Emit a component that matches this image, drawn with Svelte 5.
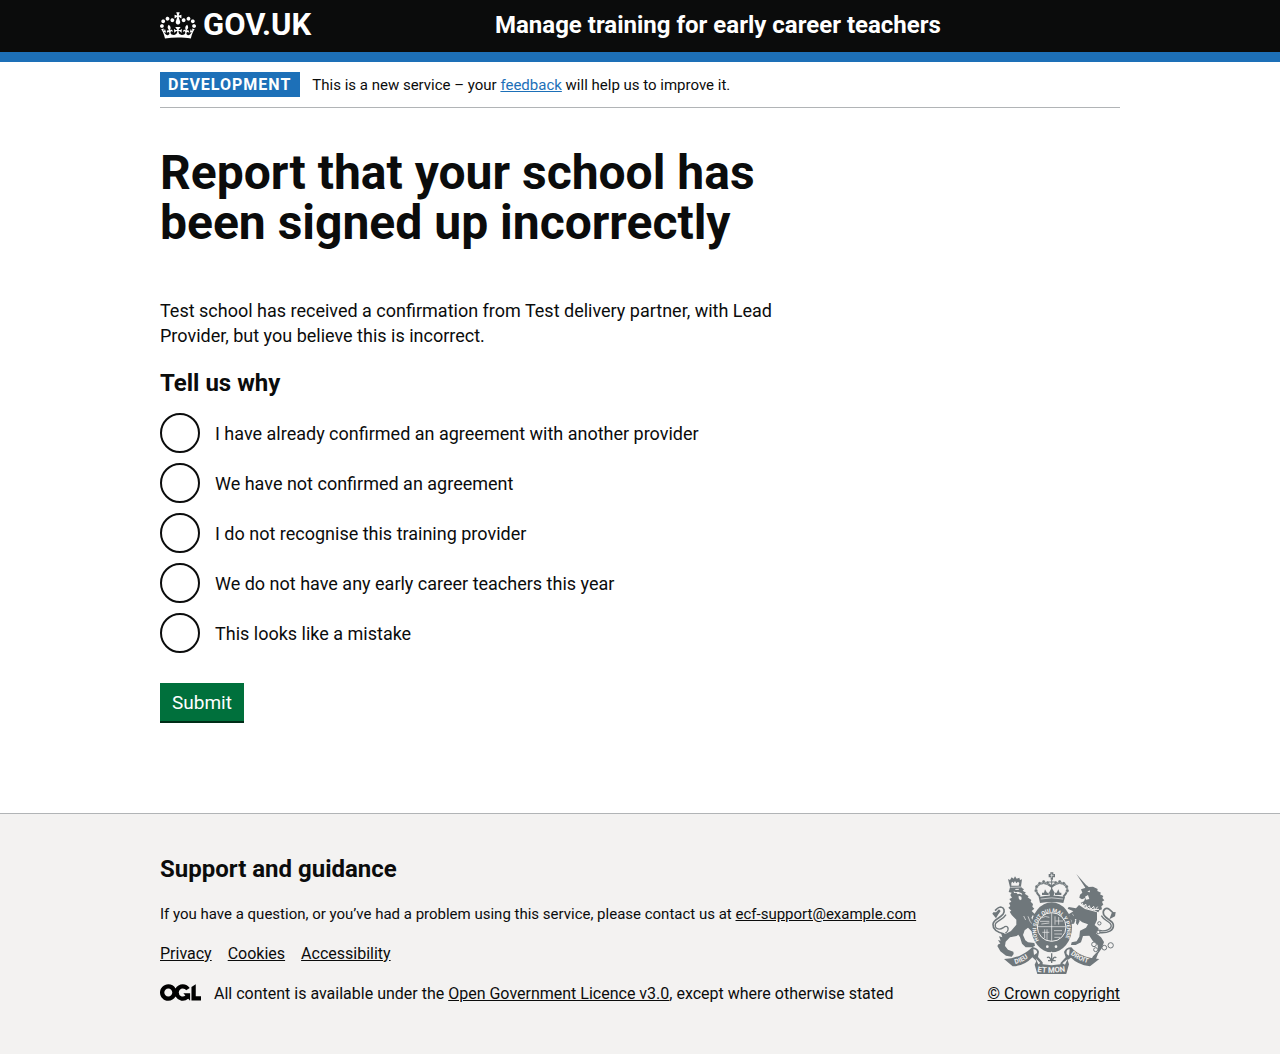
<script>
  const reasons = [
    'I have already confirmed an agreement with another provider',
    'We have not confirmed an agreement',
    'I do not recognise this training provider',
    'We do not have any early career teachers this year',
    'This looks like a mistake'
  ];
  let chosen = $state('');
  const crownBeads = [[171, 86], [173, 74], [182, 64], [194, 59], [206, 62], [230, 62], [242, 59], [254, 64], [263, 74], [265, 86]];
</script>

<div class="page">
  <header class="header">
    <div class="container header-row">
      <a class="logo" href="/">
        <svg class="crown" viewBox="0 0 132 97" aria-hidden="true">
          <path d="M25 30.2c3.5 1.5 7.7-.2 9.1-3.7 1.5-3.6-.2-7.8-3.9-9.2-3.6-1.4-7.6.3-9.1 3.9-1.4 3.5.3 7.5 3.9 9zM9 39.5c3.6 1.5 7.8-.2 9.2-3.7 1.5-3.6-.2-7.8-3.9-9.1-3.6-1.5-7.6.2-9.1 3.8-1.4 3.5.3 7.5 3.8 9zM4.4 57.2c3.5 1.5 7.7-.2 9.1-3.8 1.5-3.6-.2-7.7-3.9-9.1-3.5-1.5-7.6.3-9.1 3.8-1.4 3.5.3 7.6 3.9 9.1zm38.3-21.4c3.5 1.5 7.7-.2 9.1-3.8 1.5-3.6-.2-7.7-3.9-9.1-3.6-1.5-7.6.3-9.1 3.8-1.3 3.6.4 7.7 3.9 9.1zm64.4-5.6c-3.6 1.5-7.8-.2-9.1-3.7-1.5-3.6.2-7.8 3.8-9.2 3.6-1.4 7.7.3 9.2 3.9 1.3 3.5-.4 7.5-3.9 9zm15.9 9.3c-3.6 1.5-7.7-.2-9.1-3.7-1.5-3.6.2-7.8 3.7-9.1 3.6-1.5 7.7.2 9.2 3.8 1.5 3.5-.3 7.5-3.8 9zm4.7 17.7c-3.6 1.5-7.8-.2-9.2-3.8-1.5-3.6.2-7.7 3.9-9.1 3.6-1.5 7.7.3 9.2 3.8 1.3 3.5-.4 7.6-3.9 9.1zM89.3 35.8c-3.6 1.5-7.8-.2-9.2-3.8-1.4-3.6.2-7.7 3.9-9.1 3.6-1.5 7.7.3 9.2 3.8 1.4 3.6-.3 7.7-3.9 9.1zM69.7 17.7l8.9 4.7V9.3l-8.9 2.8c-.2-.3-.5-.6-.9-.9L72.4 0H59.6l3.5 11.2c-.3.3-.6.5-.9.9l-8.8-2.8v13.1l8.8-4.7c.3.3.6.7.9.9l-5 15.4v.1c-.2.8-.4 1.6-.4 2.4 0 4.1 3.1 7.5 7 8.1h.2c.3 0 .7.1 1 .1.4 0 .7 0 1-.1h.2c4-.6 7.1-4.1 7.1-8.1 0-.8-.1-1.7-.4-2.4V34l-5.1-15.4c.4-.2.7-.6 1-.9zM66 92.8c16.9 0 32.8 1.1 47.1 3.2 4-16.9 8.9-26.7 14-33.5l-9.6-3.4c1 4.9 1.1 7.2 0 10.2-1.5-1.4-3-4.3-4.2-8.7L108.6 76c2.8-2 5-3.2 7.5-3.3-4.4 9.4-10 11.9-13.6 11.2-4.3-.8-6.3-4.6-5.6-7.9 1-4.7 5.7-5.9 8-.5 4.3-8.7-3-11.4-7.6-8.8 7.1-7.2 7.9-13.5 2.1-21.1-8 6.1-8.1 12.3-4.5 20.8-4.7-5.4-12.1-2.5-9.5 6.2 3.4-5.2 7.9-2 7.2 3.1-.6 4.3-6.4 7.8-13.5 7.2-10.3-.9-10.9-8-11.2-13.8 2.5-.5 7.1 1.8 11 7.3L80.2 60c-4.1 4.4-8 5.3-12.3 5.4 1.4-4.4 8-11.6 8-11.6H55.5s6.4 7.2 7.9 11.6c-4.2-.1-8-1-12.3-5.4l1.4 16.4c3.9-5.5 8.5-7.7 10.9-7.3-.3 5.8-.9 12.8-11.1 13.8-7.2.6-12.9-2.9-13.5-7.2-.7-5 3.8-8.3 7.1-3.1 2.7-8.7-4.6-11.6-9.4-6.2 3.7-8.5 3.6-14.7-4.6-20.8-5.8 7.6-5 13.9 2.2 21.1-4.7-2.6-11.9.1-7.7 8.8 2.3-5.5 7.1-4.2 8.1.5.7 3.3-1.3 7.1-5.7 7.9-3.5.7-9-1.8-13.5-11.2 2.5.1 4.7 1.3 7.5 3.3l-4.7-15.4c-1.2 4.4-2.7 7.2-4.3 8.7-1.1-3-.9-5.3 0-10.2l-9.5 3.4c5 6.9 9.9 16.7 14 33.5 14.8-2.1 30.8-3.2 47.7-3.2z" />
        </svg>
        <span>GOV.UK</span>
      </a>
      <a class="service" href="/service">Manage training for early career teachers</a>
    </div>
  </header>

  <div class="container">
    <div class="phase">
      <strong class="tag">DEVELOPMENT</strong>
      <span class="phase-text">This is a new service – your <a href="/feedback">feedback</a> will help us to improve it.</span>
    </div>
  </div>

  <main class="container main">
    <div class="column">
      <h1>Report that your school has been signed up incorrectly</h1>
      <p class="body">Test school has received a confirmation from Test delivery partner, with Lead Provider, but you believe this is incorrect.</p>
      <form onsubmit={(e) => e.preventDefault()}>
        <fieldset>
          <legend>Tell us why</legend>
          <div class="radios">
            {#each reasons as reason, i}
              <div class="radio">
                <input type="radio" name="reason" id="reason-{i}" value={reason} bind:group={chosen} />
                <label for="reason-{i}">{reason}</label>
              </div>
            {/each}
          </div>
        </fieldset>
        <button type="submit">Submit</button>
      </form>
    </div>
  </main>

  <footer class="footer">
    <div class="container footer-row">
      <div class="footer-main">
        <h2>Support and guidance</h2>
        <p>If you have a question, or you’ve had a problem using this service, please contact us at <a href="mailto:ecf-support@example.com">ecf-support@example.com</a></p>
        <ul>
          <li><a href="/privacy">Privacy</a></li>
          <li><a href="/cookies">Cookies</a></li>
          <li><a href="/accessibility">Accessibility</a></li>
        </ul>
        <div class="licence">
          <svg class="ogl" viewBox="0 0 483.2 195.7" aria-hidden="true">
            <path d="M421.5 142.8V.1l-50.7 32.3v161.1h112.4v-50.7zm-122.3-9.6A47.12 47.12 0 0 1 221 97.8c0-26 21.1-47.1 47.1-47.1 16.7 0 31.4 8.7 39.7 21.8l42.7-27.2A97.63 97.63 0 0 0 268.1 0c-36.5 0-68.3 20.1-85.1 49.7A98 98 0 0 0 97.8 0C43.9 0 0 43.9 0 97.8s43.9 97.8 97.8 97.8c36.5 0 68.3-20.1 85.1-49.7a97.76 97.76 0 0 0 149.6 25.4l19.4 22.2h3v-87.8h-80l24.3 27.5zM97.8 145c-26 0-47.1-21.1-47.1-47.1s21.1-47.1 47.1-47.1 47.1 21.1 47.1 47.1S123.8 145 97.8 145" />
          </svg>
          <span>All content is available under the <a href="/licence">Open Government Licence v3.0</a>, except where otherwise stated</span>
        </div>
      </div>
      <a class="copyright" href="/copyright">
        <svg class="crest" viewBox="36 30 375 306" aria-hidden="true">
          <defs>
            <path id="garter" d="M180 235A46 54 0 1 1 256 235" />
            <path id="ribbon-left" d="M109 306Q134 300 157 281" />
            <path id="ribbon-mid" d="M175 329Q218 336 266 327" />
            <path id="ribbon-right" d="M275 277Q298 297 334 305" />
          </defs>
          <!-- lion -->
          <path class="ink" d="M93 76L87 51L93 54L98 46L104 50L108 43L113 50L121 47L123 54L129 52L126 73L129 78L135 82L131 86L141 92L137 95L149 103L146 106L157 114L155 119L162 126L160 134L166 140L158 147L164 153L170 158L169 164L161 160L157 168L166 180L170 187L165 198L158 194L164 209L157 207L147 197L137 205L132 219L139 235L147 241L166 243L168 251L160 256L140 256L129 245L123 226L118 218L113 222L93 226L80 239L78 252L87 263L103 269L104 276L98 284L81 281L64 268L55 252L59 246L64 245L57 234L65 236L60 223L70 226L66 213L79 216L96 207L112 188L112 173L98 159L92 149L97 146L88 137L94 132L90 123L97 119L91 111L99 107L94 99L98 92L89 90L91 83Z" />
          <path class="gap" d="M97 62L101 59L104 64L108 57L112 64L117 59L121 63L119 71L97 71ZM104 88L110 91L117 89L128 94L130 99L122 95L116 97L113 93L105 93ZM119 101L127 104L128 112L123 115L119 109ZM109 81L119 80L120 83L109 84Z" />
          <path class="gap-line" d="M94 76L128 75M147 163L153 178L163 190M134 162L140 174" />
          <path class="line" stroke-width="5" d="M76 216C56 211 41 201 42 187C43 171 61 171 72 157C79 147 75 136 65 135C56 135 54 141 48 146" />
          <path class="line" stroke-width="4" d="M79 214C94 202 86 186 73 197C57 207 47 197 49 187C51 177 72 174 81 158" />
          <path class="ink" d="M51 169L40 155L43 151L51 151L60 142L65 147L57 158Z" />
          <!-- unicorn -->
          <path class="ink" d="M292 36L324 72L320 79ZM306 82L318 78L323 70L329 75L342 74L356 81L355 87L366 92L363 97L373 102L370 108L376 115L369 119L373 128L367 133L369 142L361 145L358 151L350 147L318 137L305 122L315 118L319 108L309 112L301 107L303 98L310 92ZM269 135L291 139L300 129L318 141L354 151L354 174L347 189L359 199L351 214L366 226L375 240L369 258L357 275L349 296L332 301L342 283L357 267L356 249L342 238L331 221L312 222L306 241L290 249L276 249L278 241L293 238L301 224L303 206L321 197L327 187L310 181L289 165L279 154L289 175L285 185L276 186L278 177L269 157L283 148L266 140ZM266 165L293 158L302 177L296 190L291 184L292 171L270 171Z" />
          <path class="gap" d="M325 89L332 85L333 91ZM318 104L327 99L331 111L321 113Z" />
          <path class="chain" d="M302 125Q332 148 360 142M309 122L314 133L320 126L323 138L331 131L335 142L344 133L347 145L356 134" />
          <path class="line" stroke-width="5" d="M353 211C390 216 405 204 403 188C400 173 381 173 374 158C369 143 381 135 391 142L403 153" />
          <path class="line" stroke-width="4" d="M353 204C381 211 400 201 396 188C392 178 375 176 367 161" />
          <path class="ink" d="M391 172L399 151L410 150L408 163Z" />
          <g class="ring">
            <circle cx="345" cy="247" r="7" /><circle cx="350" cy="263" r="6" /><circle cx="376" cy="257" r="7" /><circle cx="395" cy="250" r="8" /><circle cx="358" cy="210" r="5" /><circle cx="361" cy="184" r="5" />
          </g>
          <!-- crown -->
          <path class="ink" d="M179 105Q218 96 258 105L253 123Q218 117 183 123ZM214 31H223V36H228V46H222V53H215V46H209V36H214Z" />
          <path class="line" stroke-width="6" d="M183 104Q165 87 174 72Q194 52 218 74Q243 52 262 72Q271 87 253 104" />
          <path class="line" stroke-width="3" d="M218 53V102M208 60H228" />
          <path class="ink" d="M189 92H195L198 82L204 92H209V99H189ZM228 92H233L238 82L242 92H247V99H228ZM210 92L218 77L227 92L223 102H213Z" />
          {#each crownBeads as [cx, cy]}
            <circle class="bead" {cx} {cy} r="5" />
          {/each}
          <path class="gap-line" d="M185 111Q218 104 252 111M214 40H224M218 35V47" />
          <!-- garter and shield -->
          <ellipse class="ink" cx="218" cy="196" rx="61" ry="75" />
          <circle class="gap-ring" cx="218" cy="195" r="43" />
          <path class="gap-line" d="M218 153V238M176 194H260" />
          <path class="gap-line" d="M187 168Q199 160 211 166M183 178H211M187 186L211 183M228 163V188M239 165V188M229 177H252M197 202V228M204 202V235M190 211H211M225 206H249M226 216H249M226 226H243" />
          <text class="motto"><textPath href="#garter">HONI SOIT QUI MAL Y PENSE</textPath></text>
          <circle class="gap" cx="205" cy="254" r="4" /><circle class="gap" cx="231" cy="254" r="4" />
          <!-- ribbons -->
          <path class="ink" d="M75 291Q123 290 158 257L161 255Q177 258 180 269L177 285L191 301L191 307Q218 312 244 307L245 302L260 286L255 270Q260 256 277 256Q302 287 361 291L333 313Q295 307 276 287L266 294L270 307L262 335Q218 344 175 336L167 308L172 297L160 286Q137 312 101 313Z" />
          <path class="gap" d="M163 262Q175 262 174 273L165 279ZM272 262Q260 262 263 276L270 281ZM170 289L184 303L178 307ZM266 291L250 304L258 308Z" />
          <path class="gap" d="M199 278L212 281L218 268L224 281L237 278L232 292L236 302L218 307L200 302L204 292Z" />
          <path class="line" stroke-width="4" d="M204 287Q213 281 216 297M218 274V303M232 287Q224 281 220 297M207 296H230" />
          <text class="banner"><textPath href="#ribbon-left">DIEU</textPath></text>
          <text class="banner banner-mid"><textPath href="#ribbon-mid">ET MON</textPath></text>
          <text class="banner"><textPath href="#ribbon-right">DROIT</textPath></text>
        </svg>
        <span>© Crown copyright</span>
      </a>
    </div>
  </footer>
</div>

<style>
  :global(body) { margin: 0; background: #f3f2f1; }
  .page { font-family: Roboto, "Liberation Sans", sans-serif; color: #0b0c0c; background: #fff; font-size: 18px; line-height: 25px; }
  .container { max-width: 960px; margin: 0 auto; }
  @media (max-width: 1020px) { .container { margin: 0 30px; } }
  .header { background: #0b0c0c; border-bottom: 10px solid #1d70b8; }
  .header-row { display: grid; grid-template-columns: 335px 1fr; align-items: center; height: 52px; }
  .header a { color: #fff; text-decoration: none; font-weight: 700; }
  .logo { display: flex; align-items: center; gap: 7px; font-size: 31px; line-height: 30px; padding-bottom: 2px; }
  .service { font-size: 24px; line-height: 30px; padding-bottom: 2px; }
  .crown { width: 36px; height: 27px; fill: #fff; }
  .phase { display: flex; align-items: center; gap: 12px; padding: 10px 0; border-bottom: 1px solid #b1b4b6; }
  .tag { background: #1d70b8; color: #fff; font-size: 16px; line-height: 25px; padding: 0 9px 0 8px; letter-spacing: 1px; }
  .phase-text { font-size: 15px; line-height: 20px; }
  .phase a { color: #1d70b8; }
  .main { padding: 40px 0 90px; }
  .column { max-width: 630px; }
  h1 { margin: 0 0 50px; font-size: 48px; line-height: 50px; font-weight: 700; }
  .body { margin: 0 0 20px; }
  fieldset { border: 0; margin: 0 0 30px; padding: 0; min-width: 0; }
  legend { font-size: 24px; line-height: 30px; font-weight: 700; padding: 0; margin-bottom: 15px; }
  .radios { display: grid; gap: 10px; }
  .radio { display: flex; align-items: center; gap: 15px; }
  .radio input { appearance: none; box-sizing: border-box; width: 40px; height: 40px; margin: 0; border: 2px solid #0b0c0c; border-radius: 50%; background: #fff; }
  .radio input:checked { background: radial-gradient(circle, #0b0c0c 10px, #fff 11px); }
  button { display: block; font: inherit; font-size: 19px; color: #fff; background: #00703c; border: 0; border-radius: 0; box-shadow: 0 2px 0 #002d18; padding: 7px 12px 6px; margin-bottom: 2px; }
  .footer { background: #f3f2f1; border-top: 1px solid #b1b4b6; padding: 40px 0 50px; font-size: 16px; line-height: 20px; }
  .footer a { color: #0b0c0c; }
  .footer-row { display: flex; justify-content: space-between; align-items: flex-end; }
  .footer h2 { margin: 0 0 20px; font-size: 24px; line-height: 30px; }
  .footer p { margin: 0 0 20px; font-size: 15px; }
  .footer ul { display: flex; gap: 16px; list-style: none; margin: 0 0 20px; padding: 0; }
  .licence { display: flex; align-items: flex-start; gap: 13px; }
  .ogl { width: 41px; height: 17px; flex: none; }
  .copyright { display: flex; flex-direction: column; align-items: center; gap: 10px; white-space: nowrap; }
  .crest { width: 125px; height: 102px; }
  .ink, .bead { fill: #6f777b; }
  .gap { fill: #f3f2f1; }
  .line, .ring { fill: none; stroke: #6f777b; }
  .ring { stroke-width: 3; fill: #f3f2f1; }
  .gap-line, .chain { fill: none; stroke: #f3f2f1; stroke-width: 2; }
  .chain { stroke-width: 3; }
  .gap-ring { fill: none; stroke: #f3f2f1; stroke-width: 3; }
  .bead { stroke: #f3f2f1; stroke-width: 1; }
  .motto, .banner { font-weight: 700; fill: #f3f2f1; }
  .motto { font-size: 16px; }
  .banner { font-size: 20px; }
  .banner-mid { font-size: 23px; }
</style>
